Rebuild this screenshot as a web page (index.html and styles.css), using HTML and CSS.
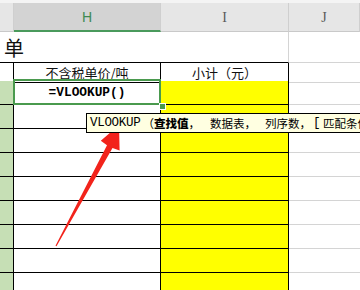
FILE: index.html
```html
<!DOCTYPE html>
<html>
<head>
<meta charset="utf-8">
<link rel="stylesheet" href="styles.css">
</head>
<body>
<div class="sheet">
  <div class="strip"></div>
  <div class="row hdr">
    <div class="c c0"></div>
    <div class="c c1 sel">H</div>
    <div class="c c2">I</div>
    <div class="c c3">J</div>
  </div>
  <div class="row title">
    <div class="c span">单</div>
    <div class="c c3"></div>
  </div>
  <div class="row r18">
    <div class="c c0"></div>
    <div class="c c1">不含税单价/吨</div>
    <div class="c c2">小计（元）</div>
    <div class="c c3"></div>
  </div>
  <div class="row data">
    <div class="c c0"></div>
    <div class="c c1 active"><span class="formula">=VLOOKUP()</span></div>
    <div class="c c2"></div>
    <div class="c c3"></div>
  </div>
  <div class="row data"><div class="c c0"></div><div class="c c1"></div><div class="c c2"></div><div class="c c3"></div></div>
  <div class="row data"><div class="c c0"></div><div class="c c1"></div><div class="c c2"></div><div class="c c3"></div></div>
  <div class="row data"><div class="c c0"></div><div class="c c1"></div><div class="c c2"></div><div class="c c3"></div></div>
  <div class="row data"><div class="c c0"></div><div class="c c1"></div><div class="c c2"></div><div class="c c3"></div></div>
  <div class="row data"><div class="c c0"></div><div class="c c1"></div><div class="c c2"></div><div class="c c3"></div></div>
  <div class="row data"><div class="c c0"></div><div class="c c1"></div><div class="c c2"></div><div class="c c3"></div></div>
  <div class="row data"><div class="c c0"></div><div class="c c1"></div><div class="c c2"></div><div class="c c3"></div></div>
  <div class="row data"><div class="c c0"></div><div class="c c1"></div><div class="c c2"></div><div class="c c3"></div></div>
</div>
<div class="tip"><span class="seg lat w-fn">VLOOKUP</span><span class="seg w-par">（</span><span class="seg w-a"><b>查找值</b>，</span><span class="seg w-b">数据表，</span><span class="seg w-c">列序数，</span><span class="seg lat w-br">[</span><span class="seg">匹配条件</span><span class="seg lat">])</span></div>
<svg class="arrow" width="360" height="290" viewBox="0 0 360 290">
  <polygon fill="#f2231b" points="119,125 119.6,150.5 112.5,148 56.5,246.3 55.5,245.7 107,145.2 100.8,140.7"/>
</svg>
</body>
</html>
```

FILE: styles.css
```css
html, body {
  margin: 0;
  padding: 0;
  background: #ffffff;
}
body {
  width: 360px;
  height: 290px;
  overflow: hidden;
  position: relative;
  font-family: "Noto Sans CJK SC", "Liberation Sans", sans-serif;
}
.sheet {
  display: flex;
  flex-direction: column;
}
.strip {
  height: 3px;
  background: #f4f4f4;
}
.row {
  display: grid;
  grid-template-columns: 14px 147px 128px 1fr;
}
.c {
  box-sizing: border-box;
  display: flex;
  align-items: center;
  justify-content: center;
  white-space: nowrap;
}
/* header */
.hdr {
  height: 29px;
  background: #e6e6e6;
}
.hdr .c {
  border-bottom: 1px solid #c9c9c9;
  border-right: 1px solid #cfcfcf;
  font-family: "Liberation Serif", serif;
  font-size: 14px;
  color: #5a5a5a;
  padding-top: 1px;
}
.hdr .sel {
  background: #d3d3d3;
  color: #3f8a52;
  font-family: "Liberation Sans", sans-serif;
  border-bottom: 2px solid #4a9a5c;
}
/* title */
.title {
  height: 31px;
}
.title .span {
  grid-column: 1 / 4;
  justify-content: flex-start;
  padding-left: 4px;
  font-size: 20px;
  color: #111;
  border-bottom: 1px solid #000;
  border-right: 1px solid #d4d4d4;
}
.title .c3 {
  border-bottom: 1px solid #d4d4d4;
}
/* table rows */
.r18 { height: 18px; }
.data { height: 24px; }
.r18 .c, .data .c {
  border-bottom: 1px solid #000;
  border-right: 1px solid #000;
  font-size: 13px;
  color: #111;
}
.r18 .c3, .data .c3 {
  border-bottom: 1px solid #d4d4d4;
  border-right: none;
}
.data .c0 { background: #c6dfb5; }
.data .c2 { background: #ffff00; }
.active {
  position: relative;
}
.active::after {
  content: "";
  position: absolute;
  left: -1px;
  top: -2px;
  width: 148px;
  height: 26px;
  border: 2px solid #4a9a4e;
  box-sizing: border-box;
  pointer-events: none;
}
.active::before {
  content: "";
  position: absolute;
  left: 145px;
  top: 22px;
  width: 5px;
  height: 5px;
  background: #4a9a4e;
  border: 1px solid #fff;
  z-index: 1;
}
.formula {
  font-family: "Liberation Mono", monospace;
  font-weight: bold;
  font-size: 12.8px;
  color: #000;
}
/* tooltip */
.tip {
  position: absolute;
  left: 86px;
  top: 113px;
  width: 274px;
  height: 20px;
  box-sizing: border-box;
  border: 1px solid #000;
  border-right: none;
  background: #ffffe1;
  padding-left: 3px;
  display: flex;
  align-items: center;
  white-space: nowrap;
  overflow: hidden;
  z-index: 2;
  color: #000;
  font-family: "Noto Sans CJK SC", sans-serif;
  font-size: 11.5px;
}
.seg {
  flex: none;
  line-height: 18px;
}
.lat {
  font-family: "Liberation Mono", monospace;
  font-size: 12.5px;
  letter-spacing: -0.3px;
}
.w-fn { width: 50px; }
.w-par { width: 14px; text-align: right; }
.w-a { width: 56px; }
.w-b { width: 55px; }
.w-c { width: 48px; }
.w-br { width: 10px; }
.seg b { font-weight: 900; }
.arrow {
  position: absolute;
  left: 0;
  top: 0;
  z-index: 1;
}
```
